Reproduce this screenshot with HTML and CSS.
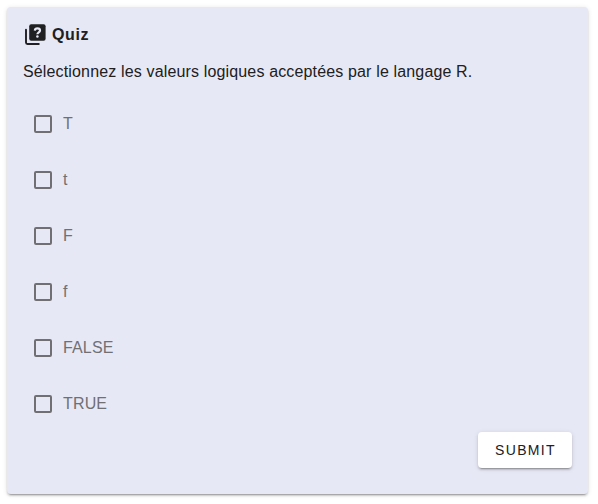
FILE: index.html
```html
<!DOCTYPE html>
<html lang="fr">
<head>
<meta charset="utf-8">
<title>Quiz</title>
<link rel="stylesheet" href="styles.css">
</head>
<body>
<form class="quiz">
  <h1 class="title">
    <svg class="title-icon" viewBox="0 0 24 24" aria-hidden="true">
      <path d="M3 6.700v12.800Q3 21 4.500 21H15.800" fill="none" stroke="currentColor" stroke-width="1.900" stroke-linecap="round"/>
      <rect x="6.200" y="1.200" width="16.400" height="16.600" rx="2" fill="currentColor"/>
      <path d="M11.800 7.600C12 6 13 5.400 14.400 5.400C16 5.400 17 6.200 17 7.500C17 9.300 14.400 9.300 14.400 11.300" fill="none" stroke="#e7e8f5" stroke-width="2.200"/>
      <circle cx="14.400" cy="13.500" r="1.250" fill="#e7e8f5"/>
    </svg>
    <span>Quiz</span>
  </h1>
  <p class="question">Sélectionnez les valeurs logiques acceptées par le langage R.</p>
  <div class="options">
    <label class="option"><input class="check" type="checkbox"><span>T</span></label>
    <label class="option"><input class="check" type="checkbox"><span>t</span></label>
    <label class="option"><input class="check" type="checkbox"><span>F</span></label>
    <label class="option"><input class="check" type="checkbox"><span>f</span></label>
    <label class="option"><input class="check" type="checkbox"><span>FALSE</span></label>
    <label class="option"><input class="check" type="checkbox"><span>TRUE</span></label>
  </div>
  <button class="submit" type="button">SUBMIT</button>
</form>
</body>
</html>
```
FILE: styles.css
```css
* { box-sizing: border-box; }
body {
  margin: 0;
  padding: 7px 10px 10px 7px;
  background: #fff;
  font: 16px/24px "Liberation Sans", Arial, sans-serif;
  color: #202022;
}
.quiz {
  display: flex;
  flex-direction: column;
  height: 487px;
  padding: 16px;
  border-radius: 4px;
  background: #e7e8f5;
  box-shadow: 0 3px 1px -2px rgba(0,0,0,.2), 0 2px 2px rgba(0,0,0,.14), 0 1px 5px rgba(0,0,0,.12);
}
.title {
  display: flex;
  align-items: center;
  gap: 5px;
  margin: 0;
  height: 24px;
  font-size: 16px;
  font-weight: 700;
  letter-spacing: .6px;
}
.title-icon { width: 24px; height: 24px; }
.question { margin: 13px 0 12px; letter-spacing: .15px; }
.options { display: grid; grid-auto-rows: 56px; color: #707074; }
.option { display: flex; align-items: center; gap: 11px; padding-left: 11px; letter-spacing: .15px; }
.check {
  appearance: none;
  width: 18px;
  height: 18px;
  margin: 0;
  border: 2px solid #707074;
  border-radius: 2px;
}
.submit {
  align-self: flex-end;
  width: 94px;
  height: 36px;
  padding: 0 0 0 1px;
  border: 0;
  border-radius: 4px;
  background: #fff;
  color: #202022;
  font: 14px "Liberation Sans", Arial, sans-serif;
  letter-spacing: 1.35px;
  box-shadow: 0 3px 1px -2px rgba(0,0,0,.2), 0 2px 2px rgba(0,0,0,.14), 0 1px 5px rgba(0,0,0,.12);
}
```
